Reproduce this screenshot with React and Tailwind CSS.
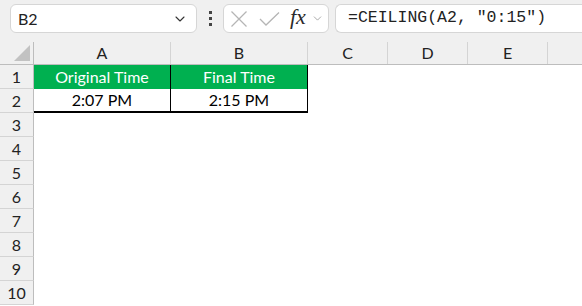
import { ChevronDown } from "lucide-react";

const cols = [
  { name: "A", w: "w-[137px]" },
  { name: "B", w: "w-[137px]" },
  { name: "C", w: "w-[80px]" },
  { name: "D", w: "w-[80px]" },
  { name: "E", w: "w-[80px]" },
];

const rows = [1, 2, 3, 4, 5, 6, 7, 8, 9, 10];

function RowHeader({ n }) {
  return (
    <div className="w-[34px] shrink-0 h-full flex items-center justify-center bg-[#f0f0f0] border-r border-b border-r-[#bdbdbd] border-b-[#d4d4d4] text-[16px] text-[#222]">
      {n}
    </div>
  );
}

function Row({ n }) {
  if (n === 1) {
    return (
      <div className="flex h-[24px]">
        <RowHeader n={n} />
        <div className="w-[137px] shrink-0 flex items-center justify-center bg-[#00b050] text-white border-r border-black text-[16px]">
          Original Time
        </div>
        <div className="w-[137px] shrink-0 flex items-center justify-center bg-[#00b050] text-white border-r border-black text-[16px]">
          Final Time
        </div>
        <div className="flex-1" />
      </div>
    );
  }
  if (n === 2) {
    return (
      <div className="flex h-[24px]">
        <RowHeader n={n} />
        <div className="w-[137px] shrink-0 flex items-center justify-center border-r border-b-2 border-black text-[16px] text-black">
          2:07 PM
        </div>
        <div className="w-[137px] shrink-0 flex items-center justify-center border-r border-b-2 border-black text-[16px] text-black">
          2:15 PM
        </div>
        <div className="flex-1" />
      </div>
    );
  }
  return (
    <div className="flex h-[24px]">
      <RowHeader n={n} />
      <div className="flex-1" />
    </div>
  );
}

export default function App() {
  return (
    <div className="w-[582px] h-[306px] overflow-hidden bg-white font-['Lato',sans-serif]">
      <div className="h-[42px] bg-[#f0f0f0] flex items-start pt-[4px]">
        <div className="ml-[10px] w-[187px] h-[29px] shrink-0 bg-white border border-[#d6d6d6] rounded-[6px] flex items-center pl-[7px] pr-[8px] text-[16px] text-[#222]">
          <span className="flex-1">B2</span>
          <ChevronDown size={16} strokeWidth={1.6} className="text-[#333]" />
        </div>
        <div className="w-[26px] h-[29px] shrink-0 flex flex-col items-center justify-center gap-[3px]">
          <div className="w-[3px] h-[3px] bg-[#444]" />
          <div className="w-[3px] h-[3px] bg-[#444]" />
          <div className="w-[3px] h-[3px] bg-[#444]" />
        </div>
        <div className="w-[106px] h-[29px] shrink-0 bg-white border border-[#d6d6d6] rounded-[6px] flex items-center pl-[6px]">
          <svg width="18" height="18" viewBox="0 0 18 18" className="shrink-0">
            <path d="M1.5 1.5 L16.5 16.5 M16.5 1.5 L1.5 16.5" stroke="#b5b5b5" strokeWidth="1.3" fill="none" />
          </svg>
          <svg width="21" height="16" viewBox="0 0 21 16" className="ml-[11px] shrink-0">
            <path d="M1 8 L7 14 L20 1.5" stroke="#b5b5b5" strokeWidth="1.3" fill="none" />
          </svg>
          <span className="ml-[10px] font-['Liberation_Serif',serif] italic text-[22px] leading-none text-[#2a2a2a] -mt-[3px]">
            fx
          </span>
          <ChevronDown size={13} strokeWidth={1.3} className="ml-[5px] text-[#888]" />
        </div>
        <div className="ml-[6px] flex-1 h-[29px] bg-white border border-r-0 border-[#d6d6d6] rounded-l-[6px] flex items-center pl-[12px] font-['Liberation_Mono',monospace] text-[16.5px] text-[#222]">
          =CEILING(A2, "0:15")
        </div>
      </div>
      <div className="flex h-[23px] border-b border-[#bdbdbd]">
        <div className="w-[34px] shrink-0 h-full relative bg-[#f0f0f0] border-r border-[#bdbdbd]">
          <div className="absolute right-[3px] bottom-[3px] w-0 h-0 border-l-[16px] border-l-transparent border-b-[16px] border-b-[#c2c2c2]" />
        </div>
        {cols.map((c) => (
          <div
            key={c.name}
            className={`${c.w} shrink-0 h-full flex items-center justify-center bg-[#f0f0f0] border-r border-[#d4d4d4] text-[16px] text-[#222]`}
          >
            {c.name}
          </div>
        ))}
        <div className="flex-1 bg-[#f0f0f0]" />
      </div>
      {rows.map((n) => (
        <Row key={n} n={n} />
      ))}
    </div>
  );
}
